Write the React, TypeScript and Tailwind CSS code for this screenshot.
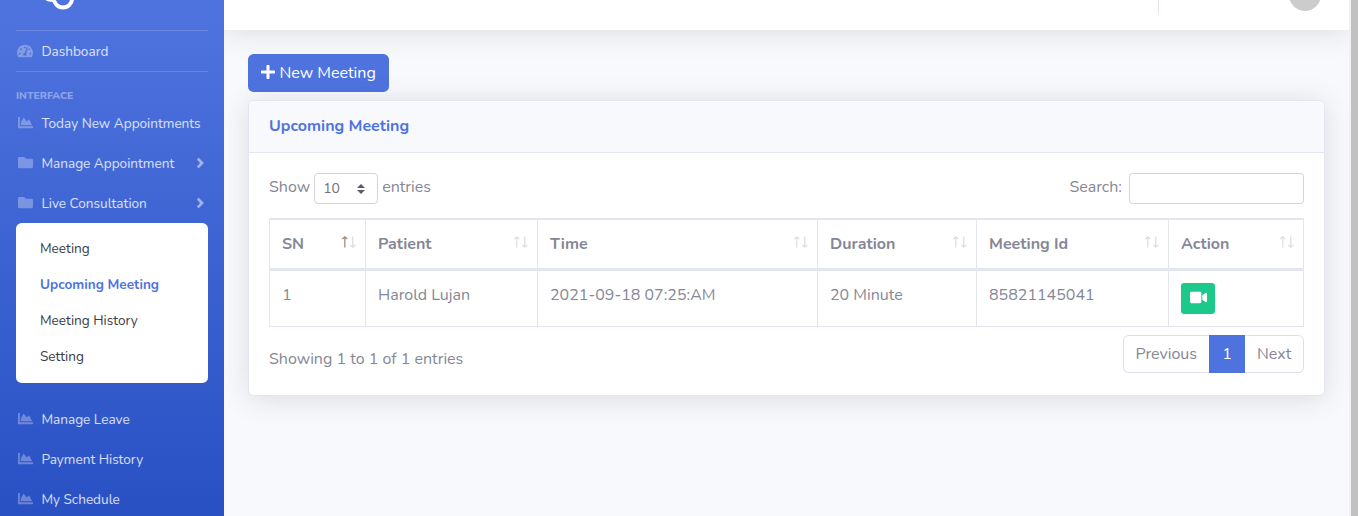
import type { ReactNode } from "react";
import { FaChartArea, FaFolder, FaPlus, FaTachometerAlt, FaVideo } from "react-icons/fa";

function NavItem({ icon, label, arrow }: { icon: ReactNode; label: string; arrow?: boolean }) {
  return (
    <a className="flex h-10 items-center px-4 text-[13.6px] text-white/80">
      <span className="flex w-[18px] justify-center text-white/30">{icon}</span>
      <span className="mt-[2px] ml-[7.4px] leading-5 whitespace-nowrap">{label}</span>
      {arrow && (
        <svg width="8" height="12" viewBox="0 0 8 12" fill="none" className="mr-1 ml-auto text-white/50">
          <path d="M1.8 1.6L6 6l-4.2 4.4" stroke="currentColor" strokeWidth="2.7" />
        </svg>
      )}
    </a>
  );
}

function SortArrows({ active }: { active?: boolean }) {
  return (
    <svg width="16" height="12" viewBox="0 0 16 12" fill="none" className="-mt-[5px] shrink-0">
      <path d="M3.8 11.5V1.2M1.3 3L3.8 .9 6.3 3" stroke={active ? "#a5897f" : "#dedfe4"} strokeWidth="1.3" />
      <path d="M11.8 .5v10.3M9.3 9l2.5 2.1L14.3 9" stroke="#dedfe4" strokeWidth="1.3" />
    </svg>
  );
}

const columns = [
  { label: "SN", width: "w-24", value: "1" },
  { label: "Patient", width: "w-[172px]", value: "Harold Lujan" },
  { label: "Time", width: "w-[280px]", value: "2021-09-18 07:25:AM" },
  { label: "Duration", width: "w-[159px]", value: "20 Minute" },
  { label: "Meeting Id", width: "w-48", value: "85821145041" },
  { label: "Action", width: "w-[135px]", value: null },
];

const chart = <FaChartArea className="mb-px size-[15px]" />;
const folder = <FaFolder className="mb-px size-[15px]" />;

function Sidebar() {
  return (
    <aside className="h-[516px] w-56 shrink-0 overflow-hidden bg-[linear-gradient(180deg,#4e73df_0px,#4e73df_20px,#224abe_610px)]">
      <div className="h-[30px]">
        <svg width="224" height="30" viewBox="0 0 224 30" fill="none" stroke="#fff">
          <circle cx="63" cy="-1.6" r="9.1" strokeWidth="3.9" />
          <path d="M46 -1Q49 1.6 54 0" strokeWidth="2.4" />
        </svg>
      </div>
      <hr className="mx-4 border-white/15" />
      <NavItem icon={<FaTachometerAlt className="size-4" />} label="Dashboard" />
      <hr className="mx-4 border-white/15" />
      <div className="mt-[17px] h-[14px] px-4 text-[10.4px] leading-[14px] font-extrabold text-white/40">INTERFACE</div>
      <NavItem icon={chart} label="Today New Appointments" />
      <NavItem icon={folder} label="Manage Appointment" arrow />
      <NavItem icon={folder} label="Live Consultation" arrow />
      <div className="mx-4 mb-4 h-40 rounded-[5.6px] bg-white px-6 py-2 text-[13.6px] leading-9 text-[#3a3b45]">
        <div>Meeting</div>
        <div className="font-bold text-[#4e73df]">Upcoming Meeting</div>
        <div>Meeting History</div>
        <div>Setting</div>
      </div>
      <NavItem icon={chart} label="Manage Leave" />
      <NavItem icon={chart} label="Payment History" />
      <NavItem icon={chart} label="My Schedule" />
    </aside>
  );
}

export default function App() {
  return (
    <div className="flex h-[516px] w-[1358px] overflow-hidden bg-[#f8f9fc] font-['Nunito','Lato',sans-serif] text-base text-[#858796]">
      <Sidebar />
      <div className="flex w-[1125px] flex-col overflow-hidden">
        <header className="flex h-[30px] shrink-0 justify-end bg-white shadow-[0_2.4px_28px_0_rgba(58,59,69,0.15)]">
          <div className="h-[14px] w-px bg-[#e3e6f0]" />
          <svg className="mr-7 ml-[130px]" width="32" height="12" viewBox="0 0 32 12">
            <circle cx="16" cy="-5" r="16" fill="#cccccc" />
          </svg>
        </header>
        <main className="px-6 pt-6">
          <button className="flex h-[38px] w-[141px] items-center rounded-[5.6px] bg-[#4e73df] pl-3 text-white">
            <FaPlus className="mb-[2px] size-4" />
            <span className="ml-[3.4px] leading-6 whitespace-nowrap">New Meeting</span>
          </button>
          <section className="mt-2 h-[296px] w-[1077px] rounded-[5.6px] border border-[#e3e6f0] bg-white shadow-[0_2.4px_28px_0_rgba(58,59,69,0.15)]">
            <h6 className="h-[52px] rounded-t-[5px] border-b border-[#e3e6f0] bg-[#f8f9fc] px-5 pt-[13px] leading-6 font-bold text-[#4e73df]">
              Upcoming Meeting
            </h6>
            <div className="px-5 pt-5">
              <div className="flex h-[31px] justify-between">
                <div className="flex items-center">
                  <span className="mb-1">Show</span>
                  <div className="mr-1 ml-1 flex h-[31px] w-16 items-center rounded-[4px] border border-[#d1d3e2] pr-2 pl-2 text-sm text-[#6e707e]">
                    <span>10</span>
                    <svg className="mr-1 ml-auto" width="8" height="10" viewBox="0 0 8 10" fill="#5a5c69">
                      <path d="M4 0l4 4H0zM4 10L0 6h8z" />
                    </svg>
                  </div>
                  <span className="mb-1">entries</span>
                </div>
                <div className="flex items-center">
                  <span className="mr-[7px] mb-[3px]">Search:</span>
                  <input aria-label="Search" className="h-[31px] w-[175px] rounded-[3.2px] border border-[#d1d3e2] bg-white" />
                </div>
              </div>
              <div className="mt-[14px] h-[109px] w-[1035px] border-x border-t-2 border-b border-[#e3e6f0]">
                <div className="-ml-px flex h-[51px] w-[1035px] border-b-[3px] border-[#e3e6f0]">
                  {columns.map((c, i) => (
                    <div key={c.label} className={`flex ${c.width} shrink-0 items-center justify-between border-l border-[#e3e6f0] pr-2 pl-3`}>
                      <span className="mb-px font-bold whitespace-nowrap">{c.label}</span>
                      <SortArrows active={i === 0} />
                    </div>
                  ))}
                </div>
                <div className="-ml-px flex h-[55px]">
                  {columns.map((c) => (
                    <div key={c.label} className={`${c.width} shrink-0 border-l border-[#e3e6f0] pt-3 pl-3 whitespace-nowrap`}>
                      {c.value ?? (
                        <button className="flex h-[31px] w-[34px] items-center justify-center rounded-[3.2px] bg-[#1cc88a] text-white">
                          <FaVideo className="mb-[2px] size-[17px]" />
                        </button>
                      )}
                    </div>
                  ))}
                </div>
              </div>
              <div className="mt-2 flex h-[38px] justify-between">
                <span className="mt-3 leading-6">Showing 1 to 1 of 1 entries</span>
                <div className="flex h-[38px] leading-9">
                  <span className="w-[86px] rounded-l-[5.6px] border border-r-0 border-[#dddfeb] pl-[11.5px]">Previous</span>
                  <span className="w-9 bg-[#4e73df] pt-px text-center text-white">1</span>
                  <span className="w-[59px] rounded-r-[5.6px] border border-l-0 border-[#dddfeb] pl-3">Next</span>
                </div>
              </div>
            </div>
          </section>
        </main>
      </div>
      <div className="w-[9px] shrink-0 border-l-2 border-[#f1f1f1] bg-[#c1c1c1]" />
    </div>
  );
}
